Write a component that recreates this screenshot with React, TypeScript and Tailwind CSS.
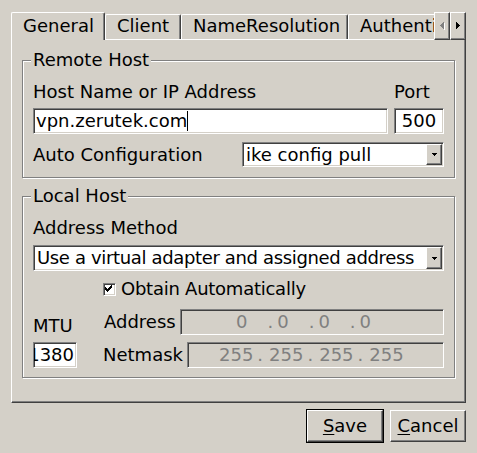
import { Fragment, type ReactNode } from 'react';

const sunken =
  'border border-t-[#808080] border-l-[#808080] border-r-white border-b-white shadow-[inset_1px_1px_0_#404040,inset_-1px_-1px_0_#d4d0c8] p-px';
const raised =
  'border border-t-white border-l-white border-r-[#404040] border-b-[#404040] shadow-[inset_-1px_-1px_0_#808080]';

function DownArrow() {
  return (
    <svg width="5" height="3" viewBox="0 0 5 3" shapeRendering="crispEdges">
      <path d="M0 0h5v1h-1v1h-1v1h-1v-1h-1v-1h-1z" fill="#000" />
    </svg>
  );
}

function SideArrow({ dir, disabled }: { dir: 'left' | 'right'; disabled?: boolean }) {
  const d =
    dir === 'left'
      ? 'M0 3h1v1H0z M1 2h1v3H1z M2 1h1v5H2z M3 0h1v7H3z'
      : 'M3 3h1v1H3z M2 2h1v3H2z M1 1h1v5H1z M0 0h1v7H0z';
  return (
    <svg width="5" height="8" viewBox="0 0 5 8" shapeRendering="crispEdges">
      {disabled && <path d={d} fill="#fff" transform="translate(1 1)" />}
      <path d={d} fill={disabled ? '#808080' : '#000'} />
    </svg>
  );
}

function CheckMark() {
  return (
    <svg width="13" height="13" viewBox="0 0 13 13" shapeRendering="crispEdges" className="absolute -left-[2px] -top-[2px]">
      <path
        d="M9 3h1v1h-1z M8 4h2v1h-2z M3 5h1v1h-1z M7 5h3v1h-3z M3 6h2v1h-2z M6 6h3v1h-3z M3 7h5v1h-5z M4 8h3v1h-3z M5 9h1v1h-1z"
        fill="#000"
      />
    </svg>
  );
}

function GroupBox({ title, className, children }: { title: string; className: string; children: ReactNode }) {
  return (
    <div className={`relative border border-[#808080] shadow-[inset_1px_1px_0_#fff,1px_1px_0_#fff] ${className}`}>
      <span className="absolute left-[8px] -top-[11px] bg-[#d4d0c8] px-[2px]">{title}</span>
      {children}
    </div>
  );
}

function Combo({ value, className, textClass = '' }: { value: string; className: string; textClass?: string }) {
  return (
    <div className={`flex bg-white ${sunken} ${className}`}>
      <div className={`flex flex-1 items-center overflow-hidden whitespace-nowrap pl-[2px] ${textClass}`}>{value}</div>
      <div className={`flex w-[16px] items-center justify-center bg-[#d4d0c8] ${raised}`}>
        <DownArrow />
      </div>
    </div>
  );
}

function IpBox({ parts, className, padClass, dotClass, segClass }: {
  parts: string[];
  className: string;
  padClass: string;
  dotClass: string;
  segClass: string;
}) {
  return (
    <div className={`flex items-center whitespace-nowrap text-[#808080] ${sunken} ${padClass} ${className}`}>
      {parts.map((p, i) => (
        <Fragment key={i}>
          {i > 0 && <span className={dotClass}>.</span>}
          <span className={i > 0 ? segClass : ''}>{p}</span>
        </Fragment>
      ))}
    </div>
  );
}

const tabs = [
  { label: 'General', width: 'w-[94px]', active: true },
  { label: 'Client', width: 'w-[76px]' },
  { label: 'NameResolution', width: 'w-[167px]' },
  { label: 'Authentication', width: 'w-[140px]' },
];

function TabBar() {
  return (
    <div className="flex h-[27px] items-end">
      <div className="flex h-[28px] w-[423px] items-end -mb-px relative z-10 overflow-hidden">
        {tabs.map((t) =>
          t.active ? (
            <div
              key={t.label}
              className={`${t.width} h-[28px] shrink-0 rounded-t-[2px] border-t border-l border-r border-t-white border-l-white border-r-[#404040] bg-[#d4d0c8] pl-[11px] pt-[3px] shadow-[inset_-1px_0_0_#808080]`}
            >
              {t.label}
            </div>
          ) : (
            <div
              key={t.label}
              className={`${t.width} mb-px h-[25px] shrink-0 rounded-t-[2px] border-t border-l border-r border-t-white border-l-white border-r-[#404040] pl-[11px] pt-px whitespace-nowrap shadow-[inset_-1px_0_0_#808080]`}
            >
              {t.label}
            </div>
          ),
        )}
      </div>
      <div className={`relative z-10 -mb-px flex h-[28px] w-[16px] items-center justify-center ${raised}`}>
        <SideArrow dir="left" disabled />
      </div>
      <div className={`relative z-10 -mb-px flex h-[28px] w-[16px] items-center justify-center ${raised}`}>
        <SideArrow dir="right" />
      </div>
    </div>
  );
}

export default function App() {
  return (
    <div className="h-[453px] w-[477px] select-none bg-[#d4d0c8] pl-[11px] pr-[11px] pt-[12px] font-['DejaVu_Sans',sans-serif] text-[18px] leading-[20px] text-black">
      <TabBar />

      <div className="h-[364px] border border-t-white border-l-white border-r-[#404040] border-b-[#404040] pl-[10px] pt-[20px] shadow-[inset_-1px_-1px_0_#808080]">
        <GroupBox title="Remote Host" className="w-[433px] px-[10px] pb-[10px] pt-[21px]">
          <div className="grid grid-cols-[355px_50px] gap-x-[6px] gap-y-[6px]">
            <div>Host Name or IP Address</div>
            <div>Port</div>
            <div className={`flex h-[26px] items-center bg-white pl-[2px] ${sunken}`}>
              <span className="whitespace-nowrap">vpn.zerutek.com</span>
              <span className="h-[20px] w-px bg-black" />
            </div>
            <div className={`flex h-[26px] items-center justify-center bg-white ${sunken}`}>500</div>
          </div>
          <div className="mt-[8px] flex items-center justify-between">
            <div>Auto Configuration</div>
            <Combo value="ike config pull" className="h-[25px] w-[202px]" />
          </div>
        </GroupBox>

        <GroupBox title="Local Host" className="mt-[18px] w-[433px] px-[10px] pb-[9px] pt-[21px]">
          <div>Address Method</div>
          <Combo
            value="Use a virtual adapter and assigned address"
            className="mt-[7px] h-[26px] w-full"
            textClass="tracking-[-0.35px]"
          />
          <div className="mt-[8px] grid grid-cols-[44px_1fr] gap-x-[26px]">
            <div />
            <div className="flex h-[20px] items-center">
              <span className={`relative h-[13px] w-[13px] bg-white ${sunken}`}>
                <CheckMark />
              </span>
              <span className="ml-[5px] tracking-[-0.25px]">Obtain Automatically</span>
            </div>

            <div className="-mb-px mt-[10px] self-end">MTU</div>
            <div className="mt-[10px] flex h-[26px] items-center">
              <div className="w-[77px] pl-px">Address</div>
              <IpBox
                parts={['0', '0', '0', '0']}
                className="h-[26px] flex-1"
                padClass="pl-[55px]"
                dotClass="ml-[20px]"
                segClass="ml-[4px]"
              />
            </div>

            <div className={`mt-[7px] flex h-[26px] items-center justify-end overflow-hidden bg-white pr-[2px] ${sunken}`}>
              <span className="whitespace-nowrap">1380</span>
            </div>
            <div className="mt-[7px] flex h-[26px] items-center">
              <div className="w-[84px]">Netmask</div>
              <IpBox
                parts={['255', '255', '255', '255']}
                className="h-[26px] flex-1"
                padClass="pl-[31px]"
                dotClass="ml-[4px]"
                segClass="ml-[6px]"
              />
            </div>
          </div>
        </GroupBox>
      </div>

      <div className="mt-[6px] flex items-center justify-end gap-[6px]">
        <div className="border border-black">
          <div className={`flex h-[32px] w-[76px] items-center justify-center ${raised}`}>
            <span>
              <span className="underline underline-offset-[2px]">S</span>ave
            </span>
          </div>
        </div>
        <div className={`flex h-[32px] w-[76px] items-center justify-center ${raised}`}>
          <span>
            <span className="underline underline-offset-[2px]">C</span>ancel
          </span>
        </div>
      </div>
    </div>
  );
}
